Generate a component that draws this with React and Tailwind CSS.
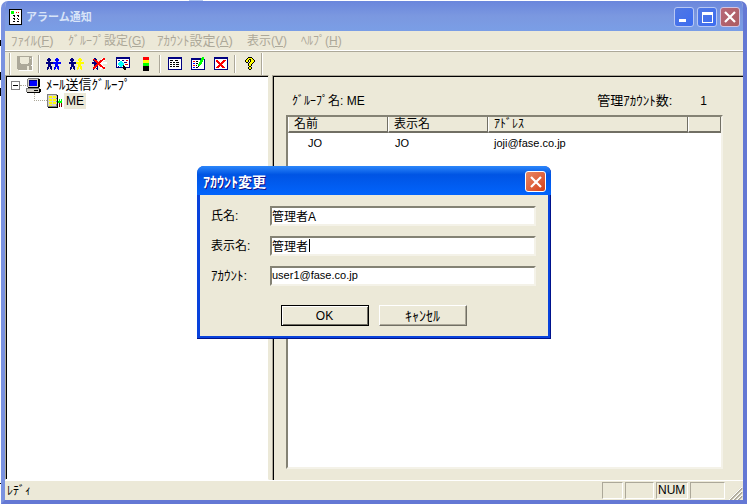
import clsx from 'clsx'

const PALETTE = {
  k: '#000000',
  w: '#ffffff',
  n: '#000080',
  b: '#0000ff',
  y: '#ffff00',
  o: '#ffe400',
  r: '#ff0000',
  d: '#800000',
  g: '#00ff00',
  c: '#00ffff',
  s: '#aca899',
  l: '#d4d0c8',
  m: '#808080',
}

const ICONS = {
  app: [
    'kkkkkkkkkkkkk',
    'kwwwwwwwwwwwk',
    'kwgggwwwwwwwk',
    'kwgggwwrwrwwk',
    'kwgggwwwwwwwk',
    'kwwwwwwwwwwwk',
    'kwwwkkwwkkwwk',
    'kwwwwkwwwkwwk',
    'kwwwwwwwwwwwk',
    'kwwwkkwwkwwwk',
    'kwwwwkwwwkwwk',
    'kwwwwwwwwwwwk',
    'kwwwkkwwkkwwk',
    'kwwwwwwwwwwwk',
    'kwwwwwwwwwwwk',
    'kkkkkkkkkkkkk',
  ],
  save: [
    'sssssssssssssss.',
    'sss.........sssw',
    'sss.........s.sw',
    'sss.........sssw',
    'sss.........sssw',
    'sss.........sssw',
    'sss.........sssw',
    'ssss.......ssssw',
    'sssssssssssssssw',
    'ssssssssssssssww',
    'ssssssssss..sssw',
    'ssssssssss..sssw',
    'ssssssssss..sssw',
    '.sssssssss..sssw',
    '..wwwwwwwwwwwwww',
  ],
  group: [
    '..nn......bb...',
    '.nnnn....bbbb..',
    '.nnnn....bbbb..',
    '..nn......bb...',
    'nnnnnnnbbbbbbbb',
    'nnnnnnnbbbbbbbb',
    '..nnn....bbb...',
    '..nnn....bbb...',
    '..nnnn...bbbb..',
    '.nn.nn..bb.bb..',
    '.nn.nn..bb.bb..',
    '.n...n..b...b..',
  ],
  groupAdd: [
    '..nn......yy...',
    '.nnnn....yyyy..',
    '.nnnn....yyyy..',
    '..nn......yy...',
    'nnnnnnnyyyyyyyy',
    'nnnnnnnyyyyyyyy',
    '..nnn....yyy...',
    '..nnn....yyy...',
    '..nnnn...yyyy..',
    '.nn.nn..yy.yy..',
    '.nn.nn..yy.yy..',
    '.n...n..y...y..',
  ],
  groupRemove: [
    '..nn......wrr..',
    '.rrnn....wrrr..',
    '.nrrr...rrrww..',
    '..nrrr.rrrw....',
    'nnnnrrrrrwwwwww',
    'nnnnnrrrwwwwwww',
    '..nnrrrrrww....',
    '..nrrr.rrrw....',
    '..rrrn..rrrww..',
    '.rrr.n..wwrrr..',
    '.rr.nn..ww.rr..',
    '.n...n..w...w..',
  ],
  find: [
    'nnnnnnnnnnnnnn',
    'nnnnnnnnnnnnnn',
    'nwwwwwwwwwwwwn',
    'nwnnwwnnwwrrwn',
    'nwwwccwwwwwwwn',
    'nwwccccwnnnwwn',
    'nwccccccwwwwwn',
    'nwccccccwrrrwn',
    'nwwcccckwwwwwn',
    'nwnwccwkkwwwwn',
    'nnnnnnnkkknnnn',
    '.......kkk....',
    '........kk....',
  ],
  signal: [
    'rrrrrr',
    'rrrrrr',
    'rrrrrr',
    'yyyyyy',
    'yyyyyy',
    'yyyyyy',
    'gggggg',
    'gggggg',
    'gggggg',
    'kkkkkk',
    'kkkkkk',
    'kkkkkk',
    'kkkkkk',
    'kkkkkk',
  ],
  list: [
    'nnnnnnnnnnnnnn',
    'nnnnnnnnnnnnnn',
    'nwwwwwwwwwwwwn',
    'nwkkkwwkkkwwwn',
    'nwwwwwwwwwwwwn',
    'nwkkwkkwkkkwwn',
    'nwwwwwwwwwwwwn',
    'nwkkwkkwkkkwwn',
    'nwwwwwwwwwwwwn',
    'nwkkwkkwkkkwwn',
    'nwwwwwwwwwwwwn',
    'nwwwwwwwwwwwwn',
    'nnnnnnnnnnnnnn',
  ],
  edit: [
    '...........gg.',
    'nnnnnnnnnnggg.',
    'nnnnnnnnnngggn',
    'nwwwwwwwwgggwn',
    'nwrrwkkwwgggwn',
    'nwwwwwwwgggwwn',
    'nwbbwkkwgggwwn',
    'nwwwwwwgggwwwn',
    'nwrrwkwggwwwwn',
    'nwwwwwwkwwwwwn',
    'nwbbwkkwwwwwwn',
    'nwwwwwwwwwwwwn',
    'nnnnnnnnnnnnnn',
  ],
  remove: [
    'nnnnnnnnnnnnnn',
    'nnnnnnnnnnnnnn',
    'nwwwwwwwwwwwwn',
    'nwrrwwwwwrrrwn',
    'nwrrrwwwrrrwwn',
    'nwwrrrwrrrwwwn',
    'nwwwrrrrrwwwwn',
    'nwwwwrrrwwwwwn',
    'nwwwrrrrrwwwwn',
    'nwwrrrwrrrwwwn',
    'nwrrrwwwrrrwwn',
    'nwwwwwwwwwwwwn',
    'nnnnnnnnnnnnnn',
  ],
  help: [
    '...kkkk...',
    '..kyyyyk..',
    '.kyykkyyk.',
    'kyyk.kyyyk',
    'kyyk.kyyyk',
    '.kk.kyyyk.',
    '...kyyyk..',
    '...kyyk...',
    '...kyyk...',
    '....kk....',
    '...kyyk...',
    '...kyyk...',
    '....kk....',
  ],
  computer: [
    '..mmmmmmmmmmm..',
    '.mllllllllllkk.',
    '.mlnnnnnnnnlkk.',
    '.mlnbbbbbbblkk.',
    '.mlnbbbbbbblkk.',
    '.mlnbbbbbbblkk.',
    '.mlnbbbbbbblkk.',
    '.mlnbbbbbbblkk.',
    '.mllllllllllkk.',
    '..kkkkkkkkkkk..',
    'mmmmmmmmmmmmmm.',
    'mllllllllllllkk',
    'mlllllllkkkklkk',
    'mllllllllllllkk',
    '.kkkkkkkkkkkkk.',
  ],
  station: [
    'mmmmmmmmmm.....',
    'mllllllllmk....',
    'mlyyylyyylk....',
    'mlyyylyyylk....',
    'mllllllllmk....',
    'mlyyylyyylk.g.g',
    'mlyyylyyylk.g.g',
    'mllllllllmkgggg',
    'mlyyylyyylkgggg',
    'mlyyylyyylk.d.d',
    'mllllllllmk.d.d',
    'mlyyyllllmk.d.d',
    'mmmmmmmmmmk.d.d',
    '.kkkkkkkkkk....',
  ],
}

function PixelIcon({ name }) {
  const rows = ICONS[name]
  const width = rows[0].length
  return (
    <svg
      width={width}
      height={rows.length}
      viewBox={`0 0 ${width} ${rows.length}`}
      shapeRendering="crispEdges"
      className="shrink-0"
      aria-hidden="true"
    >
      {rows.flatMap((row, y) =>
        [...row.matchAll(/([^.])\1*/g)].map((run) => (
          <rect
            key={`${run.index}-${y}`}
            x={run.index}
            y={y}
            width={run[0].length}
            height="1"
            fill={PALETTE[run[1]]}
          />
        )),
      )}
    </svg>
  )
}

const MENUS = [
  { label: 'ﾌｧｲﾙ', hotkey: 'F', className: 'w-[57px] text-[13px]' },
  { label: 'ｸﾞﾙｰﾌﾟ設定', hotkey: 'G', className: 'w-[89px]' },
  { label: 'ｱｶｳﾝﾄ設定', hotkey: 'A', className: 'w-[90px] text-[13px]' },
  { label: '表示', hotkey: 'V', className: 'w-[54px]' },
  { label: 'ﾍﾙﾌﾟ', hotkey: 'H', className: 'w-[54px]' },
]

const TOOLS = [
  [{ icon: 'save', label: '保存', disabled: true }],
  [
    { icon: 'group', label: 'グループ' },
    { icon: 'groupAdd', label: 'グループ追加' },
    { icon: 'groupRemove', label: 'グループ削除' },
    { icon: 'find', label: '検索' },
    { icon: 'signal', label: 'アラーム' },
  ],
  [
    { icon: 'list', label: 'アカウント一覧' },
    { icon: 'edit', label: 'アカウント変更' },
    { icon: 'remove', label: 'アカウント削除' },
  ],
  [{ icon: 'help', label: 'ヘルプ' }],
]

function CloseMark() {
  return (
    <svg width="12" height="12" viewBox="0 0 12 12" stroke="#fff" strokeWidth="2.2" aria-hidden="true">
      <path d="M1 1l10 10M11 1L1 11" />
    </svg>
  )
}

function TitleBar() {
  return (
    <header className="flex h-[30px] shrink-0 items-center justify-between bg-linear-to-b from-[#6a86dc] via-[#7b98e0] to-[#7a9ee6] pt-0.5 pr-[3px] pl-1">
      <div className="flex items-center gap-1">
        <PixelIcon name="app" />
        <h1 className="text-[11px] font-bold text-[#d8e4f8]">アラーム通知</h1>
      </div>
      <div className="flex gap-[3px]">
        <button type="button" aria-label="最小化" className="flex size-5 items-end rounded-[3px] border border-[#b8c8f4] bg-linear-to-br from-[#5078e4] to-[#3c6cf0] p-1">
          <span className="h-[3px] w-[7px] bg-white" />
        </button>
        <button type="button" aria-label="最大化" className="grid size-5 place-items-center rounded-[3px] border border-[#b8c8f4] bg-linear-to-br from-[#5078e4] to-[#3c6cf0]">
          <span className="size-[11px] border border-t-[3px] border-white" />
        </button>
        <button type="button" aria-label="閉じる" className="grid size-5 place-items-center rounded-[3px] border border-[#d4c4e0] bg-linear-to-br from-[#b86878] to-[#ac5c60]">
          <CloseMark />
        </button>
      </div>
    </header>
  )
}

function MenuBar() {
  return (
    <nav className="flex h-5 shrink-0 items-center border-b border-white pl-1.5 text-[#aca899]">
      {MENUS.map((m) => (
        <button key={m.hotkey} type="button" disabled className={clsx('shrink-0 text-left whitespace-nowrap', m.className)}>
          {m.label}(<span className="underline">{m.hotkey}</span>)
        </button>
      ))}
    </nav>
  )
}

function ToolBar() {
  return (
    <div role="toolbar" className="flex h-6 shrink-0 items-center border-t border-[#aca899] pl-0.5">
      {TOOLS.map((section, i) => (
        <div key={i} className="flex items-center">
          <span className={clsx('mx-0.5 w-0.5 border-r border-l border-r-white border-l-[#aca899]', i === 0 ? 'h-[22px]' : 'h-[18px]')} />
          {section.map((tool) => (
            <button key={tool.icon} type="button" aria-label={tool.label} disabled={tool.disabled} className="grid h-[22px] w-[23px] place-items-center">
              <PixelIcon name={tool.icon} />
            </button>
          ))}
        </div>
      ))}
      <span className="h-[22px] w-0.5 border-r border-l border-r-white border-l-[#aca899]" />
    </div>
  )
}

function GroupTree() {
  return (
    <aside className="w-[264px] shrink-0 border border-t-[#aca899] border-r-[#ece9d8] border-b-white border-l-[#aca899] bg-white pt-px pl-[5px] shadow-[inset_1px_1px_0_#000]">
      <div className="flex h-4 items-center">
        <button type="button" aria-label="折りたたむ" className="grid size-[9px] place-items-center border border-[#848284]">
          <span className="h-px w-[5px] bg-black" />
        </button>
        <span className="w-1.5 border-t border-dotted border-[#aca899]" />
        <PixelIcon name="computer" />
        <span className="pl-[5px] text-[13px]">ﾒｰﾙ送信ｸﾞﾙｰﾌﾟ</span>
      </div>
      <div className="flex h-4 items-center pl-[23px]">
        <span className="h-2 w-[13px] self-start border-b border-l border-dotted border-[#aca899]" />
        <PixelIcon name="station" />
        <span className="ml-0.5 bg-[#ece9d8] px-0.5 leading-4">ME</span>
      </div>
    </aside>
  )
}

function HeaderCell({ children, className }) {
  return (
    <th className={clsx('h-4 border-r border-b-2 border-l border-r-[#716f64] border-b-[#716f64] border-l-white p-0 pl-[5px] text-left leading-[14px] font-normal', className)}>
      {children}
    </th>
  )
}

function AccountPane() {
  return (
    <main className="flex min-w-0 flex-1 flex-col border-t border-l border-[#aca899] pt-[17px] pr-5 pb-[11px] pl-[13px] shadow-[inset_1px_1px_0_#000]">
      <div className="flex h-[22px] items-start justify-between pr-4 pl-1.5">
        <p>ｸﾞﾙｰﾌﾟ名: ME</p>
        <p className="flex gap-7">
          <span className="text-[13px]">管理ｱｶｳﾝﾄ数:</span>
          <span>1</span>
        </p>
      </div>
      <div className="flex-1 border-2 border-t-[#848274] border-r-[#f4f2e8] border-b-[#f4f2e8] border-l-[#848274] bg-white">
        <table className="w-full table-fixed border-separate border-spacing-0">
          <thead className="bg-[#ece9d8]">
            <tr>
              <HeaderCell className="w-[100px]">名前</HeaderCell>
              <HeaderCell className="w-[100px]">表示名</HeaderCell>
              <HeaderCell className="w-[200px]">ｱﾄﾞﾚｽ</HeaderCell>
              <HeaderCell />
            </tr>
          </thead>
          <tbody className="text-[11px]">
            <tr className="h-5">
              <td className="p-0 pl-5">JO</td>
              <td className="p-0 pl-[7px]">JO</td>
              <td className="p-0 pl-1.5">joji@fase.co.jp</td>
              <td className="p-0" />
            </tr>
          </tbody>
        </table>
      </div>
    </main>
  )
}

function StatusBar() {
  const cell = 'h-[17px] border border-t-[#aca899] border-r-white border-b-white border-l-[#aca899]'
  return (
    <footer className="flex h-5 shrink-0 items-center border-t border-white pl-0.5">
      <span className="flex-1">ﾚﾃﾞｨ</span>
      <div className="flex gap-0.5 leading-[15px]">
        <span className={clsx(cell, 'w-[21px]')} />
        <span className={clsx(cell, 'w-[29px]')} />
        <span className={clsx(cell, 'w-8 pl-px')}>NUM</span>
        <span className={clsx(cell, 'w-[35px]')} />
      </div>
      <svg width="18" height="14" viewBox="0 0 18 14" className="self-end" fill="none" aria-hidden="true">
        <path d="M5 14L17 2M9 14l8-8M13 14l4-4" stroke="#aca899" strokeWidth="2" />
        <path d="M4 14L17 1M8 14l9-9M12 14l5-5" stroke="#fff" />
      </svg>
    </footer>
  )
}

function Field({ id, label, value, active, labelClass, inputClass }) {
  return (
    <div className="flex h-5 items-center">
      <label htmlFor={id} className={clsx('w-[59px] shrink-0', labelClass)}>{label}</label>
      <div className="relative flex min-w-0 flex-1">
        <input
          id={id}
          defaultValue={value}
          className={clsx(
            'h-5 min-w-0 flex-1 border-2 border-t-[#848274] border-r-[#f4f2e8] border-b-[#f4f2e8] border-l-[#848274] bg-white pb-0.5 outline-none',
            active && 'caret-transparent',
            inputClass,
          )}
        />
        {active && <span className="absolute top-[3px] left-[39px] h-[13px] w-px bg-black" />}
      </div>
    </div>
  )
}

function AccountDialog() {
  return (
    <div className="absolute inset-0 grid place-items-center pt-px pl-px">
      <section role="dialog" aria-labelledby="dialog-title" className="w-[354px] rounded-t-[7px] bg-[#0842dc] px-[3px] pb-[3px] shadow-[inset_-1px_-1px_0_#00138c]">
        <header className="-mx-[3px] flex h-[29px] items-center justify-between rounded-t-[7px] bg-linear-to-b from-[#2c86fa] via-[#0054e4] via-30% to-[#0264fc] pt-0.5 pr-[5px] pl-1.5">
          <h2 id="dialog-title" className="text-sm font-bold text-white text-shadow-[1px_1px_0_#0f1089]">ｱｶｳﾝﾄ変更</h2>
          <button type="button" aria-label="閉じる" className="grid size-[21px] place-items-center rounded-[3px] border border-white bg-linear-to-br from-[#e88864] to-[#d43c10]">
            <CloseMark />
          </button>
        </header>
        <form className="bg-[#ece9d8] pt-[11px] pr-3 pb-2.5 pl-[11px]">
          <div className="flex flex-col gap-2.5">
            <Field id="name" label="氏名:" value="管理者A" />
            <Field id="display" label="表示名:" value="管理者" active />
            <Field id="account" label="ｱｶｳﾝﾄ:" value="user1@fase.co.jp" labelClass="text-[13px]" inputClass="text-[11px]" />
          </div>
          <div className="flex justify-center gap-2.5 pt-[19px]">
            <button type="submit" className="h-[21px] w-[88px] border border-black shadow-[inset_1px_1px_0_#fff,inset_-1px_-1px_0_#716f64]">
              OK
            </button>
            <button type="button" className="h-[21px] w-[88px] border border-t-white border-r-[#716f64] border-b-[#716f64] border-l-white text-sm leading-4 shadow-[inset_-1px_-1px_0_#aca899]">
              ｷｬﾝｾﾙ
            </button>
          </div>
        </form>
      </section>
    </div>
  )
}

// slivers of the window behind, visible along the top and left edges
function Backdrop() {
  return (
    <div className="absolute inset-0" aria-hidden="true">
      <span className="absolute top-0 left-[189px] h-px w-3.5 bg-[#b4c8f0]" />
      <span className="absolute top-10 left-0 h-1.5 w-px bg-black" />
      <span className="absolute top-[72px] left-0 h-2 w-px bg-black" />
      <span className="absolute top-[88px] left-0 h-2 w-px bg-black" />
      <span className="absolute top-[483px] left-0 h-px w-px bg-black" />
    </div>
  )
}

export default function App() {
  return (
    <div className="relative flex h-screen bg-white pt-px pl-px font-['Liberation_Sans','Noto_Sans_CJK_JP',sans-serif] text-xs leading-4 text-black">
      <Backdrop />
      <div className="relative flex min-w-0 flex-1 flex-col overflow-hidden rounded-t-[7px] border-r-4 border-b-4 border-l-4 border-r-[#6478d4] border-b-[#6478d4] border-l-[#7a92e0] bg-[#ece9d8]">
        <TitleBar />
        <MenuBar />
        <ToolBar />
        <div className="flex min-h-0 flex-1 gap-[3px]">
          <GroupTree />
          <AccountPane />
        </div>
        <StatusBar />
      </div>
      <AccountDialog />
    </div>
  )
}
